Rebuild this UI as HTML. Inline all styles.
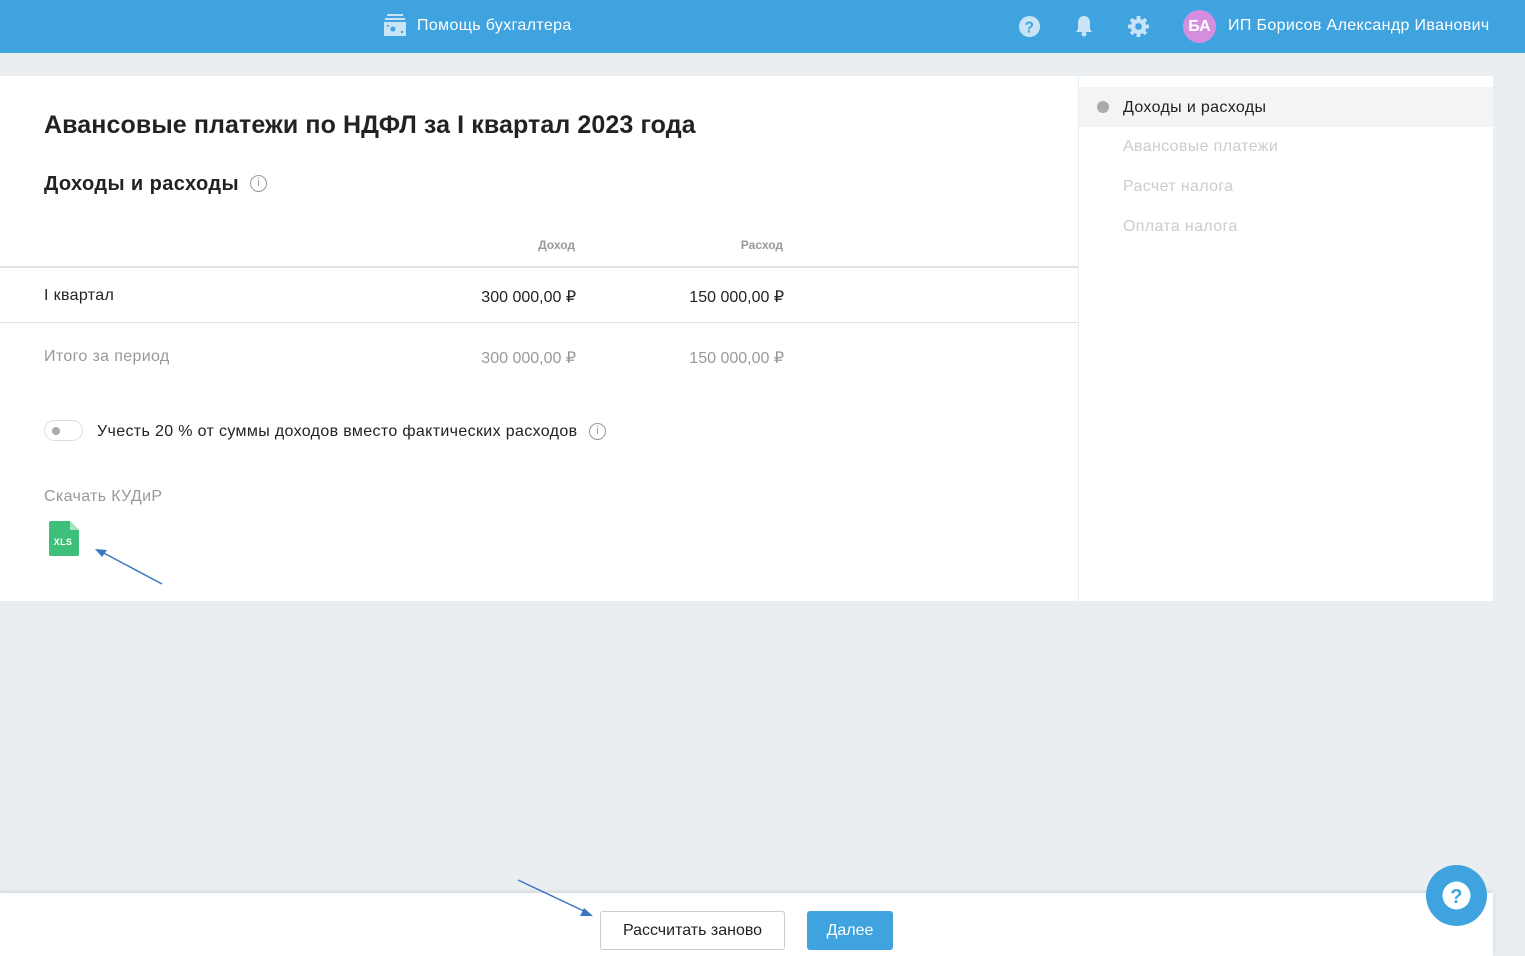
<!DOCTYPE html>
<html><head><meta charset="utf-8"><style>
*{margin:0;padding:0;box-sizing:border-box}
body{width:1525px;height:956px;background:#ebeef1;font-family:"Liberation Sans",sans-serif;position:relative;overflow:hidden;color:#222;letter-spacing:0.35px}
.hdr{position:absolute;left:0;top:0;width:1525px;height:53px;background:#3ea3de;color:#fff}
.a{position:absolute}
.main{position:absolute;left:0;top:76px;width:1078px;height:525px;background:#fff}
.side{position:absolute;left:1079px;top:76px;width:414px;height:525px;background:#fff}
.foot{position:absolute;left:0;top:893px;width:1493px;height:63px;background:#fff;box-shadow:0 -1px 4px rgba(0,0,0,.12)}
</style></head><body>
<div class="hdr">
 <svg class="a" style="left:384px;top:14px" width="22" height="22" viewBox="0 0 22 22"><rect x="3" y="0" width="16" height="2" fill="#c8e4f6"/><rect x="1" y="4" width="20" height="2" fill="#c8e4f6"/><rect x="0" y="8" width="22" height="14" fill="#c8e4f6"/><circle cx="9" cy="15" r="2.5" fill="#3ea3de"/><circle cx="18" cy="18" r="1.2" fill="#3ea3de"/><circle cx="4" cy="12" r="1" fill="#3ea3de"/></svg>
 <div class="a" style="left:417px;top:17px;font-size:16px">Помощь бухгалтера</div>
 <svg class="a" style="left:1018px;top:15px" width="23" height="23" viewBox="0 0 24 24"><circle cx="12" cy="12" r="11" fill="#c8e4f6"/><text x="12" y="18" text-anchor="middle" font-family="Liberation Sans" font-weight="bold" font-size="16" fill="#3ea3de">?</text></svg>
 <svg class="a" style="left:1074px;top:14px" width="20" height="24" viewBox="0 0 20 24"><path d="M10 2c-4 0-6 3-6 7v6l-2 3h16l-2-3V9c0-4-2-7-6-7z" fill="#c8e4f6"/><circle cx="10" cy="20" r="2.5" fill="#c8e4f6"/></svg>
 <svg class="a" style="left:1127px;top:15px" width="23" height="23" viewBox="0 0 24 24"><g fill="#c8e4f6"><circle cx="12" cy="12" r="8"/><rect x="10" y="1" width="4" height="22"/><rect x="1" y="10" width="22" height="4"/><rect x="10" y="1" width="4" height="22" transform="rotate(45 12 12)"/><rect x="10" y="1" width="4" height="22" transform="rotate(-45 12 12)"/></g><circle cx="12" cy="12" r="3.5" fill="#3ea3de"/></svg>
 <div class="a" style="left:1183px;top:10px;width:33px;height:33px;border-radius:50%;background:#d48ee0;font-weight:bold;font-size:16px;text-align:center;line-height:33px;letter-spacing:0">БА</div>
 <div class="a" style="left:1228px;top:17px;font-size:16px">ИП Борисов Александр Иванович</div>
</div>
<div class="main">
 <div class="a" style="left:44px;top:35px;font-size:25px;color:#222;font-weight:bold;letter-spacing:0.1px">Авансовые платежи по НДФЛ за I квартал 2023 года</div>
 <div class="a" style="left:44px;top:97px;font-size:20px;color:#222;font-weight:bold;letter-spacing:0.4px">Доходы и расходы</div>
 <div class="a" style="left:250px;top:99px;width:17px;height:17px;border:1.5px solid #999;border-radius:50%;font-size:11px;color:#999;text-align:center;line-height:14px;letter-spacing:0">i</div>
 <div class="a" style="left:500px;top:162px;width:75px;text-align:right;font-size:12px;color:#999;font-weight:bold;letter-spacing:0">Доход</div>
 <div class="a" style="left:700px;top:162px;width:83px;text-align:right;font-size:12px;color:#999;font-weight:bold;letter-spacing:0">Расход</div>
 <div class="a" style="left:0;top:190px;width:1078px;border-top:2px solid #e3e3e3"></div>
 <div class="a" style="left:44px;top:211px;font-size:16px">I квартал</div>
 <div class="a" style="left:400px;top:211px;width:176px;text-align:right;font-size:16px;letter-spacing:0">300 000,00 ₽</div>
 <div class="a" style="left:600px;top:211px;width:184px;text-align:right;font-size:16px;letter-spacing:0">150 000,00 ₽</div>
 <div class="a" style="left:0;top:246px;width:1078px;border-top:1px solid #e3e3e3"></div>
 <div class="a" style="left:44px;top:272px;font-size:16px;color:#999">Итого за период</div>
 <div class="a" style="left:400px;top:272px;width:176px;text-align:right;font-size:16px;color:#999;letter-spacing:0">300 000,00 ₽</div>
 <div class="a" style="left:600px;top:272px;width:184px;text-align:right;font-size:16px;color:#999;letter-spacing:0">150 000,00 ₽</div>
 <div class="a" style="left:44px;top:344px;width:39px;height:21px;border:1px solid #ddd;border-radius:11px"><div style="position:absolute;left:7px;top:6px;width:8px;height:8px;border-radius:50%;background:#aaa"></div></div>
 <div class="a" style="left:97px;top:347px;font-size:16px">Учесть 20 % от суммы доходов вместо фактических расходов</div>
 <div class="a" style="left:589px;top:347px;width:17px;height:17px;border:1.5px solid #999;border-radius:50%;font-size:11px;color:#999;text-align:center;line-height:14px;letter-spacing:0">i</div>
 <div class="a" style="left:44px;top:412px;font-size:16px;color:#999">Скачать КУДиР</div>
 <svg class="a" style="left:49px;top:445px" width="30" height="35" viewBox="0 0 30 35"><path d="M2 0h19l9 9v24a2 2 0 0 1-2 2H2a2 2 0 0 1-2-2V2a2 2 0 0 1 2-2z" fill="#3fc07a"/><path d="M21 0l9 9h-9z" fill="#a5e4c1"/><text x="14" y="24" text-anchor="middle" font-family="Liberation Sans" font-weight="bold" font-size="9" fill="#fff">XLS</text></svg>
 <svg class="a" style="left:90px;top:470px" width="80" height="45"><line x1="72" y1="38" x2="8" y2="4" stroke="#3a78c2" stroke-width="1.5"/><path d="M5 3l12 1-5 7z" fill="#3a78c2"/></svg>
</div>
<div class="side">
 <div class="a" style="left:0;top:11px;width:414px;height:40px;background:#f4f4f4"></div>
 <div class="a" style="left:18px;top:25px;width:12px;height:12px;border-radius:50%;background:#aaa"></div>
 <div class="a" style="left:44px;top:23px;font-size:16px">Доходы и расходы</div>
 <div class="a" style="left:44px;top:62px;font-size:16px;color:#ccc">Авансовые платежи</div>
 <div class="a" style="left:44px;top:102px;font-size:16px;color:#ccc">Расчет налога</div>
 <div class="a" style="left:44px;top:142px;font-size:16px;color:#ccc">Оплата налога</div>
</div>
<div class="foot">
 <div class="a" style="left:600px;top:18px;width:185px;height:39px;border:1px solid #ccc;border-radius:3px;font-size:16px;text-align:center;line-height:37px;letter-spacing:0">Рассчитать заново</div>
 <div class="a" style="left:807px;top:18px;width:86px;height:39px;background:#3ea3de;border-radius:3px;font-size:16px;color:#fff;text-align:center;line-height:39px;letter-spacing:0">Далее</div>
</div>
<svg class="a" style="left:510px;top:875px" width="90" height="45"><line x1="8" y1="5" x2="78" y2="38" stroke="#3a78c2" stroke-width="1.5"/><path d="M83 41l-13 0 4-8z" fill="#3a78c2"/></svg>
<div class="a" style="left:1426px;top:865px;width:61px;height:61px;border-radius:50%;background:#3ea3de"><svg width="61" height="61"><circle cx="30.5" cy="30.5" r="14" fill="#fff"/><text x="30.5" y="38" text-anchor="middle" font-family="Liberation Sans" font-weight="bold" font-size="20" fill="#3ea3de">?</text></svg></div>
</body></html>
